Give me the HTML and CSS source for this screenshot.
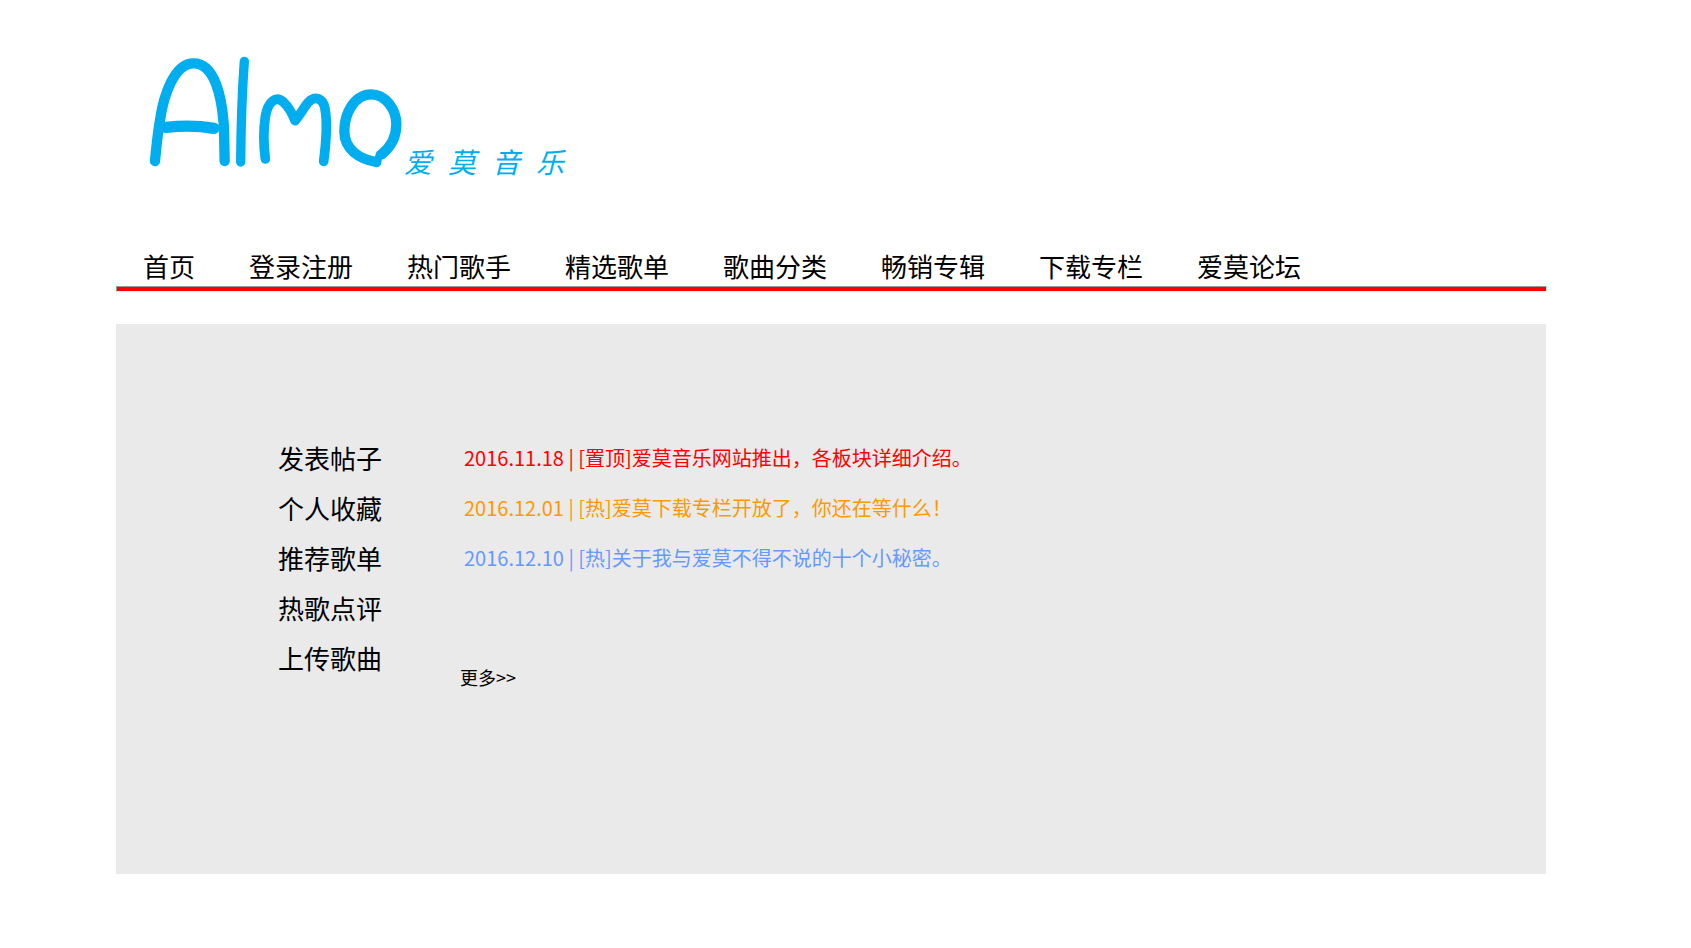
FILE: index.html
```html
<!DOCTYPE html>
<html lang="zh-CN">
<head>
<meta charset="utf-8">
<title>爱莫音乐</title>
<link rel="stylesheet" href="styles.css">
</head>
<body>
<div class="page">
  <header class="brand">
    <svg class="logo" viewBox="0 0 810 450" role="img" aria-label="Almo">
      <g fill="none" stroke="#00aef0" stroke-linecap="round" stroke-linejoin="round">
        <path stroke-width="31" d="M75 363C78 330 83 282 90 240C101 165 133 70 191 70C254 70 275 170 281 250C283 290 283 325 284 363"/>
        <path stroke-width="34" d="M108 262C155 257 205 257 252 265"/>
        <path stroke-width="28" d="M343 64C337 145 333 240 332 366"/>
        <path stroke-width="29" d="M406 357C400 310 401 262 406 230C414 183 438 167 460 186C476 201 486 218 495 242C513 222 522 201 535 187C555 166 579 174 585 206C594 255 588 310 581 364"/>
        <path stroke-width="31" d="M755 343C788 317 799 285 799 253C799 207 765 163 724 163C675 163 643 217 643 274C643 330 690 358 739 366"/>
        <path stroke-width="22" d="M741 370L748 343"/>
      </g>
    </svg>
    <div class="slogan"><span>爱</span><span>莫</span><span>音</span><span>乐</span></div>
  </header>

  <nav class="menu">
    <a href="#">首页</a>
    <a href="#">登录注册</a>
    <a href="#">热门歌手</a>
    <a href="#">精选歌单</a>
    <a href="#">歌曲分类</a>
    <a href="#">畅销专辑</a>
    <a href="#">下载专栏</a>
    <a href="#">爱莫论坛</a>
  </nav>
  <hr class="rule">

  <main class="forum">
    <nav class="actions">
      <a href="#">发表帖子</a>
      <a href="#">个人收藏</a>
      <a href="#">推荐歌单</a>
      <a href="#">热歌点评</a>
      <a href="#">上传歌曲</a>
    </nav>
    <section class="news">
      <div class="posts">
        <a class="pinned" href="#">2016.11.18 | [置顶]爱莫音乐网站推出，各板块详细介绍。</a>
        <a class="hot" href="#">2016.12.01 | [热]爱莫下载专栏开放了，你还在等什么！</a>
        <a class="normal" href="#">2016.12.10 | [热]关于我与爱莫不得不说的十个小秘密。</a>
      </div>
      <a class="more" href="#">更多&gt;&gt;</a>
    </section>
  </main>
</div>
</body>
</html>
```
FILE: styles.css
```css
* {
  box-sizing: border-box;
}

body {
  margin: 0;
  background: #fff;
  color: #000;
  font-family: "Noto Sans CJK SC", sans-serif;
  font-size: 26px;
}

a {
  color: inherit;
  text-decoration: none;
}

.page {
  margin: 0 144px 0 116px;
  padding-top: 40px;
}

.brand {
  display: flex;
  align-items: flex-start;
  padding-left: 14px;
  height: 207px;
}

.logo {
  width: 270px;
  height: 150px;
  overflow: visible;
}

.slogan {
  display: flex;
  gap: 16px;
  padding: 104px 0 0 4px;
  color: #00aef0;
  font-size: 28px;
  font-style: italic;
  line-height: 34px;
}

.menu {
  display: flex;
  flex-wrap: wrap;
  gap: 0 54px;
  padding: 0 0 2px 27px;
  line-height: 37px;
}

.rule {
  height: 6px;
  margin: 0 0 32px;
  border: 1px solid;
  border-color: #9a9a9a #eee #eee #9a9a9a;
  background: #f00;
}

.forum {
  display: flex;
  gap: 78px;
  min-height: 550px;
  margin-right: 1px;
  padding: 109px 20px 40px 162px;
  background: #eaeaea;
}

.actions,
.posts {
  display: flex;
  flex-direction: column;
  line-height: 50px;
}

.news {
  display: flex;
  flex-direction: column;
  gap: 82px;
}

.posts {
  padding-left: 4px;
  font-size: 20px;
}

.pinned {
  color: #f00;
}

.hot {
  color: #f90;
}

.normal {
  color: #69f;
}

.more {
  font-size: 18px;
  line-height: 24px;
}
```
